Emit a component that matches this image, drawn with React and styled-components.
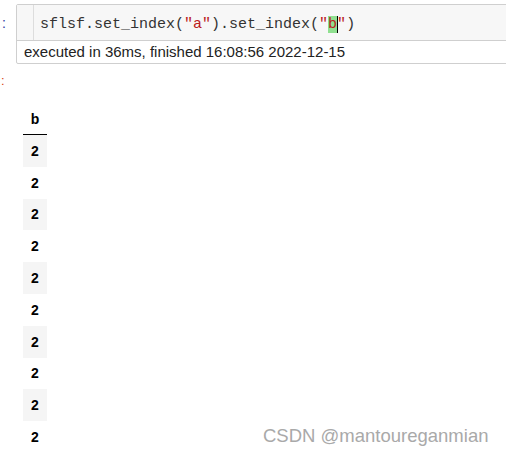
import React from "react";
import styled, { createGlobalStyle } from "styled-components";

const Global = createGlobalStyle`
  html, body { margin: 0; padding: 0; background: #fff; }
  body { width: 506px; height: 456px; overflow: hidden; font-family: "Liberation Sans", Arial, sans-serif; }
`;

const Page = styled.div`
  position: relative;
  width: 506px;
  height: 456px;
  padding-top: 4px;
  box-sizing: border-box;
`;

const CellRow = styled.div`
  display: flex;
  align-items: flex-start;
`;

const Prompt = styled.div`
  width: 16px;
  box-sizing: border-box;
  padding-left: 2px;
  font-size: 14px;
  line-height: 38px;
  color: ${(p) => p.color};
`;

const CellBox = styled.div`
  flex: 1;
  margin-right: -20px;
  border: 1px solid #cfcfcf;
  border-radius: 2px;
`;

const InputArea = styled.div`
  display: flex;
  height: 35px;
  background: #f7f7f7;
  border-bottom: 1px solid #cfcfcf;
`;

const Gutter = styled.div`
  width: 16px;
  border-right: 1px solid #dddddd;
`;

const Code = styled.pre`
  margin: 0;
  padding: 2px 0 0 6px;
  font-family: "Liberation Mono", "DejaVu Sans Mono", monospace;
  font-size: 15px;
  line-height: 35px;
  color: #333;
`;

const Str = styled.span`
  color: #ba2121;
`;

const Sel = styled.span`
  color: #ba2121;
  background: #90e090;
  box-shadow: 1px 0 0 #000;
`;

const Timing = styled.div`
  height: 22px;
  padding-left: 7px;
  font-size: 15px;
  line-height: 22px;
  color: #222;
`;

const OutRow = styled.div`
  display: flex;
  margin-top: 5px;
`;

const OutPrompt = styled.div`
  width: 16px;
  padding-left: 1px;
  font-size: 13px;
  line-height: 24px;
  color: #d84315;
`;

const Table = styled.table`
  margin-top: 35px;
  margin-left: 6px;
  border-collapse: collapse;
  font-family: "Liberation Sans", Arial, sans-serif;
  font-size: 14px;
  font-weight: bold;
  color: #000;
`;

const Th = styled.th`
  width: 24px;
  height: 30px;
  padding: 0;
  text-align: center;
  vertical-align: middle;
  border-bottom: 1px solid #000;
`;

const Td = styled.td`
  width: 24px;
  height: 31.8px;
  padding: 0;
  text-align: center;
  vertical-align: middle;
  background: ${(p) => (p.$odd ? "#f5f5f5" : "#fff")};
`;

const Watermark = styled.div`
  position: absolute;
  left: 263px;
  top: 425px;
  font-size: 18.5px;
  color: #a9a9a9;
  text-shadow: 0 0 1px #ffffff;
`;

const rows = Array.from({ length: 10 }, (_, i) => i);

export default function App() {
  return (
    <Page>
      <Global />
      <CellRow>
        <Prompt color="#303f9f">:</Prompt>
        <CellBox>
          <InputArea>
            <Gutter />
            <Code>
              sflsf.set_index(<Str>"a"</Str>).set_index(<Str>"</Str>
              <Sel>b</Sel>
              <Str>"</Str>)
            </Code>
          </InputArea>
          <Timing>executed in 36ms, finished 16:08:56 2022-12-15</Timing>
        </CellBox>
      </CellRow>
      <OutRow>
        <OutPrompt>:</OutPrompt>
        <Table>
          <thead>
            <tr>
              <Th>b</Th>
            </tr>
          </thead>
          <tbody>
            {rows.map((i) => (
              <tr key={i}>
                <Td $odd={i % 2 === 0}>2</Td>
              </tr>
            ))}
          </tbody>
        </Table>
      </OutRow>
      <Watermark>CSDN @mantoureganmian</Watermark>
    </Page>
  );
}
